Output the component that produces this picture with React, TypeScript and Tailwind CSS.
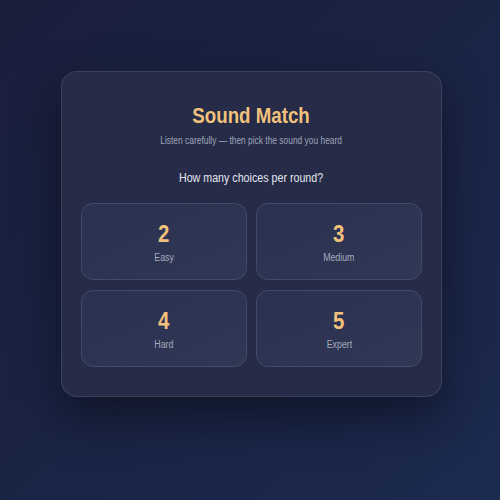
import { useState } from "react";

const levels = [
  { n: 2, label: "Easy" },
  { n: 3, label: "Medium" },
  { n: 4, label: "Hard" },
  { n: 5, label: "Expert" },
];

export default function App() {
  const [picked, setPicked] = useState<number | null>(null);

  return (
    <div
      className="w-[500px] h-[500px] flex justify-center pt-[71px] pl-[3px] bg-gradient-to-br from-[#191e3b] to-[#1b2a4f]"
      style={{ fontFamily: '"Liberation Sans", Arial, sans-serif' }}
    >
      <div className="w-[381px] h-[326px] rounded-2xl border border-white/10 bg-[#262c48] shadow-[0_20px_50px_rgba(0,0,0,0.45)] px-[19px] pt-[31px]">
        {/* condensed headings */}
        <h1 className="text-center text-[22px] font-bold leading-[26px] text-[#f2c27c]">
          <span className="inline-block scale-x-[0.85]">Sound Match</span>
        </h1>
        <p className="mt-[6px] text-center text-[10px] leading-[12px] text-[#9ea3b7]">
          <span className="inline-block whitespace-nowrap scale-x-[0.84]">Listen carefully — then pick the sound you heard</span>
        </p>
        <p className="mt-[24px] text-center text-[12px] leading-[14px] text-[#e4e6ee]">
          <span className="inline-block scale-x-[0.89]">How many choices per round?</span>
        </p>

        <div className="mt-[18px] grid grid-cols-2 gap-x-[9px] gap-y-[10px]">
          {levels.map((l) => (
            <button
              key={l.n}
              onClick={() => setPicked(l.n)}
              className={`h-[77px] rounded-xl border flex flex-col items-center justify-center bg-gradient-to-br from-[#2b3150] to-[#303856] ${
                picked === l.n ? "border-[#f2c27c]/60" : "border-[#434a68]"
              }`}
            >
              <span className="inline-block scale-x-[0.85] text-[24px] font-bold leading-[30px] text-[#f2c27c]">{l.n}</span>
              <span className="inline-block scale-x-[0.88] mt-[3px] text-[10px] leading-[12px] text-[#a5aabd]">{l.label}</span>
            </button>
          ))}
        </div>
      </div>
    </div>
  );
}
